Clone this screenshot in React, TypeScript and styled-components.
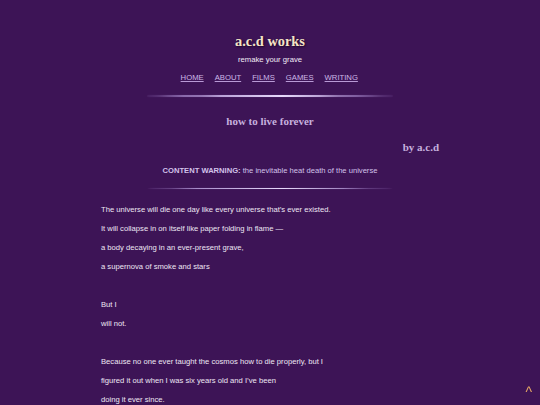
import styled, { createGlobalStyle } from "styled-components";

const GlobalStyle = createGlobalStyle`
  html, body {
    margin: 0;
    padding: 0;
    background: #3d1456;
  }
  body {
    font-family: "Liberation Sans", Arial, sans-serif;
  }
`;

const navItems = ["HOME", "ABOUT", "FILMS", "GAMES", "WRITING"];

const stanzas = [
  [
    "The universe will die one day like every universe that\u2019s ever existed.",
    "It will collapse in on itself like paper folding in flame \u2014",
    "a body decaying in an ever-present grave,",
    "a supernova of smoke and stars",
  ],
  ["But I", "will not."],
  [
    "Because no one ever taught the cosmos how to die properly, but I",
    "figured it out when I was six years old and I\u2019ve been",
    "doing it ever since.",
  ],
];

const App = () => {
  return (
    <Page>
      <GlobalStyle />
      <Header>
        <SiteTitle>a.c.d works</SiteTitle>
        <Tagline>remake your grave</Tagline>
        <Nav>
          {navItems.map((item) => (
            <NavLink key={item} href="#">
              {item}
            </NavLink>
          ))}
        </Nav>
        <Divider />
      </Header>
      <Main>
        <PoemTitle>how to live forever</PoemTitle>
        <Byline>by a.c.d</Byline>
        <Warning>
          <strong>CONTENT WARNING:</strong> the inevitable heat death of the
          universe
        </Warning>
        <Divider $gap={12} />
        <Poem>
          {stanzas.map((lines, i) => (
            <Stanza key={i}>
              {lines.map((line) => (
                <Line key={line}>{line}</Line>
              ))}
            </Stanza>
          ))}
        </Poem>
      </Main>
      <TopButton href="#">^</TopButton>
    </Page>
  );
};

const Page = styled.div`
  height: 405px;
  overflow: hidden;
  background: #3d1456;
  padding-top: 32px;
  box-sizing: border-box;
`;

const Header = styled.header`
  display: flex;
  flex-direction: column;
  align-items: center;
`;

const SiteTitle = styled.h1`
  margin: 0;
  font-family: "Liberation Serif", "Times New Roman", serif;
  font-size: 14.4px;
  line-height: 18px;
  font-weight: bold;
  color: #f4e4c6;
  text-shadow: 1px 1px 2px rgba(20, 0, 30, 0.8);
`;

const Tagline = styled.div`
  margin-top: 5px;
  font-size: 7.7px;
  line-height: 10px;
  color: #f2ecf6;
`;

const Nav = styled.nav`
  margin-top: 8px;
  display: flex;
  gap: 9.5px;
`;

const NavLink = styled.a`
  font-size: 7.7px;
  line-height: 10px;
  color: #cdb8e6;
  text-decoration: underline;
  text-decoration-color: #b99ad6;
  text-underline-offset: 1px;
  padding-right: 1.5px;
`;

const Divider = styled.div<{ $gap?: number }>`
  width: 246px;
  height: 1.5px;
  margin: ${(p) => p.$gap ?? 12}px auto 0;
  border-radius: 50%;
  background: linear-gradient(
    to right,
    rgba(200, 175, 240, 0) 0%,
    rgba(200, 175, 240, 0.7) 15%,
    rgba(232, 218, 252, 1) 55%,
    rgba(200, 175, 240, 0.6) 85%,
    rgba(200, 175, 240, 0) 100%
  );
  box-shadow: 0 0 1px rgba(190, 150, 235, 0.4);
`;

const Main = styled.main`
  width: 338px;
  margin: 0 auto;
  display: flex;
  flex-direction: column;
`;

const PoemTitle = styled.h2`
  margin: 17px 0 0;
  text-align: center;
  font-family: "Liberation Serif", "Times New Roman", serif;
  font-size: 11px;
  line-height: 14px;
  font-weight: bold;
  color: #c6b0de;
`;

const Byline = styled.div`
  margin-top: 11px;
  text-align: right;
  font-family: "Liberation Serif", "Times New Roman", serif;
  font-size: 11px;
  line-height: 16px;
  font-weight: bold;
  color: #c6b0de;
`;

const Warning = styled.div`
  margin-top: 11px;
  text-align: center;
  font-size: 7.6px;
  line-height: 10px;
  color: #d2c2ea;
  strong {
    font-weight: bold;
  }
`;

const Poem = styled.div`
  margin-top: 11px;
  display: flex;
  flex-direction: column;
  gap: 19px;
`;

const Stanza = styled.div`
  display: flex;
  flex-direction: column;
`;

const Line = styled.p`
  margin: 0;
  font-size: 7.65px;
  line-height: 19px;
  color: #ede6f3;
`;

const TopButton = styled.a`
  position: fixed;
  right: 8px;
  bottom: 6px;
  font-size: 14px;
  line-height: 14px;
  color: #e7a866;
  text-decoration: none;
`;

export default App;
